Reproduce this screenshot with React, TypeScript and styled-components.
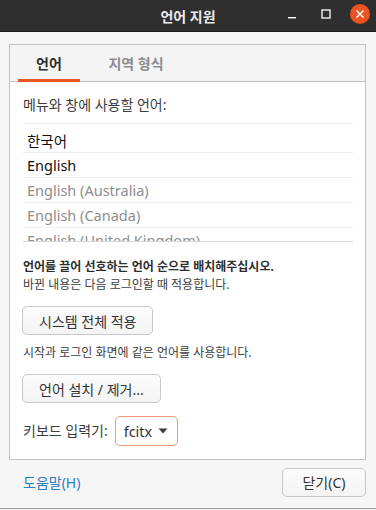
import React from 'react';
import styled, { createGlobalStyle } from 'styled-components';

const GlobalStyle = createGlobalStyle`
html, body {
    margin: 0;
    padding: 0;
    background: #f6f6f6;
}
body {
    font-family: "Noto Sans", "Noto Sans CJK KR", sans-serif;
    color: #3d3d3d;
}
`;

const languages = [
    { name: '한국어', active: true },
    { name: 'English', active: true },
    { name: 'English (Australia)', active: false },
    { name: 'English (Canada)', active: false },
    { name: 'English (United Kingdom)', active: false },
];

const App: React.FC = () => {
    return <Window>
        <GlobalStyle />
        <TitleBar>
            <Title>언어 지원</Title>
            <Controls>
                <CtrlButton aria-label="minimize">
                    <svg width="10" height="10" viewBox="0 0 10 10"><rect x="1" y="8" width="8" height="1.4" fill="#ffffff" /></svg>
                </CtrlButton>
                <CtrlButton aria-label="maximize">
                    <svg width="10" height="10" viewBox="0 0 10 10"><rect x="1" y="1" width="8" height="8" fill="none" stroke="#ffffff" strokeWidth="1.3" /></svg>
                </CtrlButton>
                <CloseButton aria-label="close">
                    <svg width="10" height="10" viewBox="0 0 10 10"><path d="M1.5 1.5 L8.5 8.5 M8.5 1.5 L1.5 8.5" stroke="#ffffff" strokeWidth="1.5" /></svg>
                </CloseButton>
            </Controls>
        </TitleBar>
        <Body>
            <Notebook>
                <TabBar>
                    <Tab active>언어</Tab>
                    <Tab>지역 형식</Tab>
                </TabBar>
                <Panel>
                    <Label>메뉴와 창에 사용할 언어:</Label>
                    <LangList>
                        {languages.map((l, i) => (
                            <LangRow key={l.name} first={i === 0} active={l.active}>{l.name}</LangRow>
                        ))}
                    </LangList>
                    <Hint>언어를 끌어 선호하는 언어 순으로 배치해주십시오.</Hint>
                    <Small>바뀐 내용은 다음 로그인할 때 적용합니다.</Small>
                    <Button>시스템 전체 적용</Button>
                    <Small>시작과 로그인 화면에 같은 언어를 사용합니다.</Small>
                    <Button>언어 설치 / 제거...</Button>
                    <KeyboardRow>
                        <Label>키보드 입력기:</Label>
                        <Combo>
                            fcitx
                            <svg width="10" height="6" viewBox="0 0 10 6"><path d="M0.5 0.5 L9.5 0.5 L5 5.5 Z" fill="#3d3d3d" /></svg>
                        </Combo>
                    </KeyboardRow>
                </Panel>
            </Notebook>
            <Footer>
                <HelpLink>도움말(H)</HelpLink>
                <FooterButton>닫기(C)</FooterButton>
            </Footer>
        </Body>
    </Window>
};

const Window = styled.div`
width: 376px;
height: 508px;
display: flex;
flex-direction: column;
background: #f6f6f6;
border-bottom: 1px solid #9a9a9a;
`

const TitleBar = styled.div`
height: 32px;
flex-shrink: 0;
background: #2f2f2f;
border-bottom: 1px solid #1c1c1c;
box-sizing: border-box;
display: flex;
align-items: center;
justify-content: center;
position: relative;
`

const Title = styled.div`
color: #ebebeb;
font-weight: 700;
font-size: 14px;
`

const Controls = styled.div`
position: absolute;
right: 6px;
top: 4px;
display: flex;
align-items: center;
gap: 14px;
`

const CtrlButton = styled.div`
width: 20px;
height: 20px;
display: flex;
align-items: center;
justify-content: center;
`

const CloseButton = styled(CtrlButton)`
border-radius: 50%;
background: #e95420;
`

const Body = styled.div`
flex: 1;
display: flex;
flex-direction: column;
padding: 12px 10px 0 9px;
`

const Notebook = styled.div`
border: 1px solid #c3c2bf;
display: flex;
flex-direction: column;
height: 416px;
box-sizing: border-box;
`

const TabBar = styled.div`
height: 37px;
box-sizing: border-box;
background: #f4f4f4;
border-bottom: 1px solid #c3c2bf;
display: flex;
padding-left: 8px;
gap: 12px;
`

const Tab = styled.div<{ active?: boolean }>`
width: ${p => p.active ? '62px' : '88px'};
display: flex;
align-items: center;
justify-content: center;
font-size: 14px;
font-weight: 700;
color: ${p => p.active ? '#2e2e2e' : '#8c8c8c'};
border-bottom: 3px solid ${p => p.active ? '#e95420' : 'transparent'};
margin-bottom: -1px;
padding-top: 2px;
`

const Panel = styled.div`
flex: 1;
background: #ffffff;
padding: 14px 12px 0 13px;
display: flex;
flex-direction: column;
align-items: flex-start;
`

const Label = styled.div`
font-size: 14px;
color: #3d3d3d;
line-height: 18px;
`

const LangList = styled.div`
margin-top: 9px;
width: 330px;
height: 117px;
overflow: hidden;
border-top: 1px solid #efefef;
border-bottom: 1px solid #d8d8d8;
`

const LangRow = styled.div<{ first?: boolean; active?: boolean }>`
height: 24px;
box-sizing: content-box;
padding: ${p => p.first ? '4px 4px 0' : '0 4px'};
display: flex;
align-items: center;
border-bottom: 1px solid #efefef;
font-size: 14.5px;
color: ${p => p.active ? '#111111' : '#8e8e8e'};
`

const Hint = styled.div`
margin-top: 16px;
font-size: 12px;
font-weight: 700;
color: #2e2e2e;
line-height: 18px;
`

const Small = styled.div`
font-size: 12px;
color: #3d3d3d;
line-height: 18px;
`

const Button = styled.div`
margin: 12px 0 9px -1px;
height: 29px;
box-sizing: border-box;
padding: 0 16px;
border: 1px solid #c8c8c8;
border-radius: 5px;
background: linear-gradient(#fbfbfb, #f4f4f4);
display: flex;
align-items: center;
font-size: 14px;
color: #333333;
`

const KeyboardRow = styled.div`
margin-top: 4px;
display: flex;
align-items: center;
gap: 7px;
`

const Combo = styled.div`
height: 30px;
box-sizing: border-box;
padding: 0 9px 0 8px;
border: 1.5px solid #ee9a7d;
border-radius: 5px;
background: #ffffff;
display: flex;
align-items: center;
gap: 6px;
font-size: 14.5px;
color: #333333;
`

const Footer = styled.div`
flex: 1;
display: flex;
align-items: center;
justify-content: space-between;
padding: 0 0 4px 14px;
`

const HelpLink = styled.div`
font-size: 14px;
color: #2a7fc1;
`

const FooterButton = styled(Button)`
margin: 0;
width: 84px;
height: 29px;
justify-content: center;
padding: 0;
`

export default App;
